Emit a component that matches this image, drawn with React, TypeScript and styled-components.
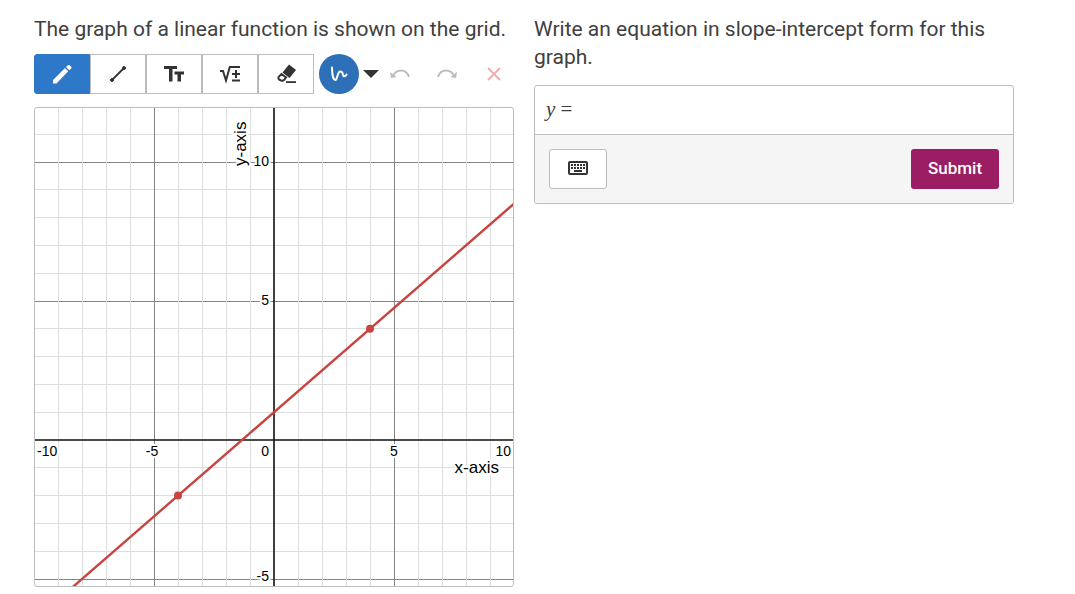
import React from 'react';
import styled, { createGlobalStyle } from 'styled-components';

const GlobalStyle = createGlobalStyle`
  *, *::before, *::after { box-sizing: border-box; }
  body {
    margin: 0;
    background: #fff;
    color: #404040;
    font-family: Roboto, 'Noto Sans', sans-serif;
  }
  button, input { font: inherit; color: inherit; }
`;

const Page = styled.main`
  display: grid;
  grid-template-columns: minmax(0, 1fr) minmax(0, 1fr);
  gap: 20px;
  align-items: start;
  padding: 15px 61px 7px 34px;
`;

const Panel = styled.section`
  display: flex;
  flex-direction: column;
`;

const Prompt = styled.p<{ $gap: number }>`
  margin: 0 0 ${(p) => p.$gap}px;
  font-size: 21px;
  line-height: 28px;
`;

const Toolbar = styled.div`
  display: flex;
  align-items: center;
  margin-bottom: 13px;
`;

const ToolGroup = styled.div`
  display: flex;
  margin-right: 5px;
`;

const ToolButton = styled.button<{ $active?: boolean }>`
  display: flex;
  align-items: center;
  justify-content: center;
  width: 56px;
  height: 40px;
  padding: 0;
  border: 1px solid ${(p) => (p.$active ? '#2e78c9' : '#bdbdbd')};
  background: ${(p) => (p.$active ? '#2e78c9' : '#fff')};
  color: ${(p) => (p.$active ? '#fff' : '#333')};
  cursor: pointer;
  &:first-child { border-radius: 3px 0 0 3px; }
`;

const StrokeButton = styled.button`
  display: flex;
  align-items: center;
  justify-content: center;
  width: 40px;
  height: 40px;
  padding: 0;
  border: 0;
  border-radius: 50%;
  background: #2d70b7;
  color: #fff;
  cursor: pointer;
`;

const PlainButton = styled.button<{ $width: number; $color: string }>`
  display: flex;
  align-items: center;
  justify-content: center;
  width: ${(p) => p.$width}px;
  height: 40px;
  padding: 0;
  border: 0;
  background: none;
  color: ${(p) => p.$color};
  cursor: pointer;
`;

const GraphFrame = styled.div`
  overflow: hidden;
  aspect-ratio: 1;
  border: 1px solid #bdbdbd;
  border-radius: 3px;
  svg { display: block; width: 100%; height: 100%; }
`;

const TickLabel = styled.text`
  font-family: 'Liberation Sans', Arial, sans-serif;
  font-size: 14px;
  fill: #000;
  stroke: #fff;
  stroke-width: 4px;
  stroke-linejoin: round;
  paint-order: stroke;
`;

const AxisTitle = styled(TickLabel)`
  font-size: 17px;
`;

const AnswerBox = styled.form`
  overflow: hidden;
  border: 1px solid #bdbdbd;
  border-radius: 3px;
`;

const EquationRow = styled.div`
  display: flex;
  align-items: center;
  gap: 4px;
  height: 49px;
  padding: 0 11px 2px;
  border-bottom: 1px solid #bdbdbd;
  font-family: 'Liberation Serif', 'Times New Roman', serif;
  font-size: 21px;
`;

const EquationInput = styled.input`
  flex: 1;
  min-width: 0;
  height: 32px;
  padding: 0;
  border: 0;
  outline: 0;
  background: none;
`;

const ActionRow = styled.div`
  display: flex;
  justify-content: space-between;
  padding: 14px;
  background: #f5f5f5;
`;

const KeypadButton = styled.button`
  display: flex;
  align-items: center;
  justify-content: center;
  width: 58px;
  height: 40px;
  padding: 0 0 2px;
  border: 1px solid #bdbdbd;
  border-radius: 3px;
  background: #fff;
  cursor: pointer;
`;

const SubmitButton = styled.button`
  width: 88px;
  height: 40px;
  padding: 0 0 2px;
  border: 0;
  border-radius: 3px;
  background: #9b1d64;
  color: #fff;
  font-size: 17px;
  font-weight: 500;
  cursor: pointer;
`;

const SIZE = 478;
const UNIT_X = 24;
const UNIT_Y = 27.8;
const ORIGIN = { x: 239, y: 332 };
const px = (x: number) => ORIGIN.x + x * UNIT_X;
const py = (y: number) => ORIGIN.y - y * UNIT_Y;
const range = (from: number, to: number) =>
  Array.from({ length: to - from + 1 }, (_, i) => from + i).filter((n) => n !== 0);
const snap = (n: number) => Math.floor(n) + 0.5;
const gridColor = (n: number) => (n % 5 === 0 ? '#858585' : '#dedede');
const byWeight = (a: number, b: number) => Number(a % 5 === 0) - Number(b % 5 === 0);

function Graph() {
  return (
    <GraphFrame>
      <svg viewBox={`0 0 ${SIZE} ${SIZE}`} role="img" aria-label="Line through (-4, -2) and (4, 4)">
        {range(-5, 11).sort(byWeight).map((n) => (
          <line key={`h${n}`} x1={0} x2={SIZE} y1={snap(py(n))} y2={snap(py(n))} stroke={gridColor(n)} />
        ))}
        {range(-9, 9).sort(byWeight).map((n) => (
          <line key={`v${n}`} y1={0} y2={SIZE} x1={snap(px(n))} x2={snap(px(n))} stroke={gridColor(n)} />
        ))}
        <path d={`M0 ${ORIGIN.y}H${SIZE}M${ORIGIN.x} 0V${SIZE}`} stroke="#111" strokeWidth={1.6} />
        <TickLabel x={2} y={348}>-10</TickLabel>
        <TickLabel x={117} y={348} textAnchor="middle">-5</TickLabel>
        <TickLabel x={234} y={348} textAnchor="end">0</TickLabel>
        <TickLabel x={359} y={348} textAnchor="middle">5</TickLabel>
        <TickLabel x={476} y={348} textAnchor="end">10</TickLabel>
        <TickLabel x={234} y={58} textAnchor="end">10</TickLabel>
        <TickLabel x={234} y={197} textAnchor="end">5</TickLabel>
        <TickLabel x={234} y={473} textAnchor="end">-5</TickLabel>
        <AxisTitle x={464} y={365} textAnchor="end">x-axis</AxisTitle>
        <AxisTitle transform="translate(211 58) rotate(-90)">y-axis</AxisTitle>
        <line x1={px(-10)} y1={py(-6.5)} x2={px(10)} y2={py(8.5)} stroke="#c74440" strokeWidth={2.4} />
        <circle cx={px(-4)} cy={py(-2)} r={4} fill="#c74440" />
        <circle cx={px(4)} cy={py(4)} r={4} fill="#c74440" />
      </svg>
    </GraphFrame>
  );
}

const PencilIcon = () => (
  <svg width="22" height="22" viewBox="0 0 22 22" fill="currentColor">
    <path d="M2 20.500v-3.500L14 5l3.200 3.200L5.500 20.500zM15 4l1.800-1.700q1-.8 1.900 0l1.500 1.500q.8.900 0 1.800L18.200 7.200z" />
  </svg>
);
const LineIcon = () => (
  <svg width="20" height="20" viewBox="0 0 20 20" stroke="currentColor" fill="currentColor">
    <path d="M4 16L16 4" strokeWidth="1.800" />
    <circle cx="4" cy="16" r="1.500" />
    <circle cx="16" cy="4" r="1.500" />
  </svg>
);
const TextIcon = () => (
  <svg width="20" height="18" viewBox="0 0 20 18" fill="currentColor">
    <path d="M0 1h13v3H8.500v12.500H5V4H0zM10.500 6.500H20v3h-3v7h-3.500v-7h-3z" />
  </svg>
);
const MathIcon = () => (
  <svg width="20" height="18" viewBox="0 0 20 18" fill="none" stroke="currentColor" strokeWidth="2">
    <path d="M0 6h3l3 9.500L9.800 2H20M12 9h8M16 5v8M12 15.500h8" />
  </svg>
);
const EraserIcon = () => (
  <svg width="22" height="22" viewBox="0 0 22 22" fill="currentColor">
    <path d="M14 1.500l7 5.500-6.500 8-7-5.500z" />
    <path d="M6.500 11l4.500 3.500-2 2.500q-1 1-3 .5L4 16.500Q3 15 3.500 14z" fill="none" stroke="currentColor" strokeWidth="2" />
    <path d="M11 18.200h10v1.800h-10z" />
  </svg>
);
const SquiggleIcon = () => (
  <svg width="20" height="20" viewBox="0 0 20 20" fill="none" stroke="currentColor" strokeWidth="2" strokeLinecap="round">
    <path d="M3 3.500C3 9 4 16 6.300 16C8.800 15.500 8 7.500 11.500 7.500C14.800 7.500 13 12.500 15.200 12.300Q17 12 17.500 10.500" />
  </svg>
);
const CaretIcon = () => (
  <svg width="16" height="8" viewBox="0 0 16 8" fill="currentColor"><path d="M0 0h16L8 8z" /></svg>
);
const UndoIcon = ({ flip = false }: { flip?: boolean }) => (
  <svg width="20" height="12" viewBox="0 0 20 12">
    <g transform={flip ? 'translate(20 0) scale(-1 1)' : undefined}>
      <path d="M3 8C6 1 16 0 19 9" fill="none" stroke="currentColor" strokeWidth="1.900" />
      <path d="M0 4l1 6 5.500-1z" fill="currentColor" />
    </g>
  </svg>
);
const ClearIcon = () => (
  <svg width="14" height="14" viewBox="0 0 14 14" stroke="currentColor" strokeWidth="1.800"><path d="M1 1l12 12M13 1L1 13" /></svg>
);
const KeyboardIcon = () => (
  <svg width="20" height="14" viewBox="0 0 20 14">
    <rect x="1" y="1" width="18" height="12" rx="1" fill="#fff" stroke="#333" strokeWidth="2" />
    <path d="M3 4h14M3 7h14" stroke="#333" strokeWidth="2" strokeDasharray="2 1" />
    <path d="M6 10h8" stroke="#333" strokeWidth="2" />
  </svg>
);

export default function App() {
  return (
    <Page>
      <GlobalStyle />
      <Panel>
        <Prompt $gap={11}>The graph of a linear function is shown on the grid.</Prompt>
        <Toolbar role="toolbar" aria-label="Sketch tools">
          <ToolGroup>
            <ToolButton type="button" $active aria-label="Pencil"><PencilIcon /></ToolButton>
            <ToolButton type="button" aria-label="Line"><LineIcon /></ToolButton>
            <ToolButton type="button" aria-label="Text"><TextIcon /></ToolButton>
            <ToolButton type="button" aria-label="Math"><MathIcon /></ToolButton>
            <ToolButton type="button" aria-label="Eraser"><EraserIcon /></ToolButton>
          </ToolGroup>
          <StrokeButton type="button" aria-label="Stroke color"><SquiggleIcon /></StrokeButton>
          <PlainButton type="button" $width={24} $color="#333" aria-label="More colors"><CaretIcon /></PlainButton>
          <PlainButton type="button" $width={34} $color="#bdbdbd" aria-label="Undo"><UndoIcon /></PlainButton>
          <PlainButton type="button" $width={60} $color="#bdbdbd" aria-label="Redo"><UndoIcon flip /></PlainButton>
          <PlainButton type="button" $width={34} $color="#f2a9a9" aria-label="Clear"><ClearIcon /></PlainButton>
        </Toolbar>
        <Graph />
      </Panel>
      <Panel>
        <Prompt $gap={14}>Write an equation in slope-intercept form for this graph.</Prompt>
        <AnswerBox onSubmit={(e: React.FormEvent) => e.preventDefault()}>
          <EquationRow>
            <label htmlFor="equation"><i>y</i> =</label>
            <EquationInput id="equation" type="text" autoComplete="off" />
          </EquationRow>
          <ActionRow>
            <KeypadButton type="button" aria-label="Open keypad"><KeyboardIcon /></KeypadButton>
            <SubmitButton type="submit">Submit</SubmitButton>
          </ActionRow>
        </AnswerBox>
      </Panel>
    </Page>
  );
}
